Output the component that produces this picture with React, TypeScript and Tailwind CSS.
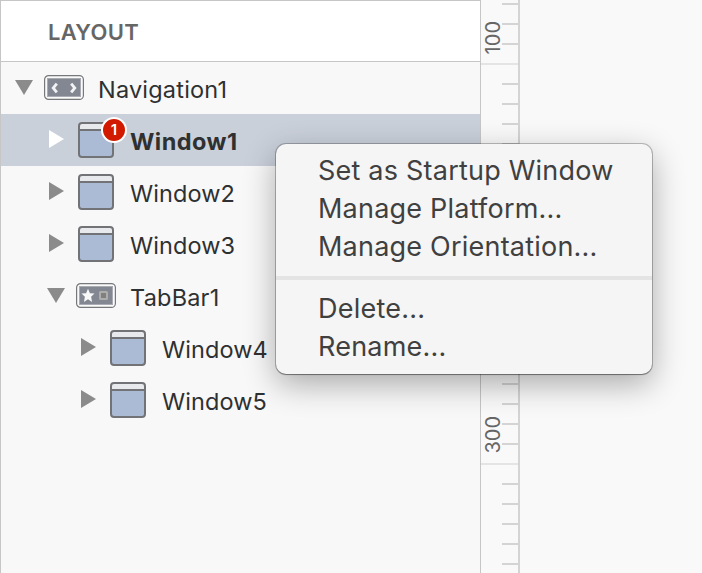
import React from "react";

function WindowIcon() {
  return (
    <svg width="36" height="36" viewBox="0 0 36 36" className="block">
      <rect x="1" y="1" width="34" height="34" rx="3" fill="#abbad5" />
      <path d="M1 8V4a3 3 0 0 1 3-3h28a3 3 0 0 1 3 3v4z" fill="#e8e9ed" />
      <path d="M1 8h34" stroke="#727377" strokeWidth="2" />
      <rect x="1" y="1" width="34" height="34" rx="3" fill="none" stroke="#727377" strokeWidth="2" />
    </svg>
  );
}

function NavigationIcon() {
  return (
    <svg width="40" height="25" viewBox="0 0 40 25" className="block">
      <rect x="0.6" y="0.6" width="38.8" height="23.8" rx="4" fill="#fafafa" stroke="#77787b" strokeWidth="1.2" />
      <rect x="3" y="3" width="34" height="19" fill="#a9acb2" />
      <rect x="4" y="4" width="32" height="17" fill="#828792" />
      <path d="M12.8 8.6l-3.6 4.4 3.6 4.4M27.2 8.6l3.6 4.4-3.6 4.4" fill="none" stroke="#f2f3f4" strokeWidth="2.8" />
    </svg>
  );
}

function TabBarIcon() {
  return (
    <svg width="40" height="25" viewBox="0 0 40 25" className="block">
      <rect x="0.6" y="0.6" width="38.8" height="23.8" rx="4" fill="#fafafa" stroke="#77787b" strokeWidth="1.2" />
      <rect x="3" y="3" width="34" height="19" fill="#a9acb2" />
      <rect x="4" y="4" width="32" height="17" fill="#828792" />
      <path d="M12 5.8l1.9 4.4 4.6.4-3.4 3.2 1 5.2-4.1-2.8L7.9 19l1-5.2-3.4-3.2 4.6-.4z" fill="#f8f8f9" />
      <rect x="24" y="9" width="7" height="7" rx="0.5" fill="#80807e" stroke="#adadac" strokeWidth="2" />
    </svg>
  );
}

function Arrow({ open, light }: { open?: boolean; light?: boolean }) {
  return open ? (
    <svg width="18" height="15" viewBox="0 0 18 15" className="block">
      <path d="M0 0h18L9 15z" fill="#8b8b8b" />
    </svg>
  ) : (
    <svg width="15" height="18" viewBox="0 0 15 18" className="block">
      <path d="M0 0v18l15-9z" fill={light ? "#fff" : "#8b8b8b"} />
    </svg>
  );
}

function WindowRow({ label, nested, selected }: { label: string; nested?: boolean; selected?: boolean }) {
  return (
    <div className={`flex h-[52px] items-start ${nested ? "pl-[80px]" : "pl-12"} ${selected ? "bg-[#cad0da]" : ""}`}>
      <div className="w-[29px] pt-4">
        <Arrow light={selected} />
      </div>
      <div className="relative w-[52px] pt-2">
        <WindowIcon />
        {selected && (
          <span className="absolute top-[3px] left-[23px] flex size-[26px] items-center justify-center rounded-full border-2 border-white bg-[#d11a00] text-[15px] font-semibold text-white">
            1
          </span>
        )}
      </div>
      <span className={`pt-[2px] text-[23.5px] leading-[52px] ${selected ? "font-bold tracking-[0.45px]" : "tracking-[0.1px]"}`}>
        {label}
      </span>
    </div>
  );
}

const ticks = Array.from({ length: 29 }, (_, i) => i);

export default function App() {
  return (
    <div className="relative flex h-[573px] w-[702px] overflow-hidden bg-[#f9f9f9] font-['Inter','Liberation_Sans',sans-serif] text-[#2f3031]">
      <aside className="flex w-[481px] shrink-0 flex-col border-t border-r border-l border-[#c6c6c6] bg-[#f8f8f8]">
        <header className="h-[61px] border-b border-[#c6c6c6] bg-white pl-[47px] text-[22px] leading-[62px] font-semibold tracking-[0.3px] text-[#666]">
          LAYOUT
        </header>
        <div className="flex h-[52px] items-start pl-[14px]">
          <div className="w-[29px] pt-[18px]"><Arrow open /></div>
          <div className="w-[54px] pt-[13px]"><NavigationIcon /></div>
          <span className="pt-[2px] text-[23.5px] leading-[52px] tracking-[0.2px]">Navigation1</span>
        </div>
        <WindowRow label="Window1" selected />
        <WindowRow label="Window2" />
        <WindowRow label="Window3" />
        <div className="flex h-[52px] items-start pl-[46px]">
          <div className="w-[29px] pt-[18px]"><Arrow open /></div>
          <div className="w-[54px] pt-[13px]"><TabBarIcon /></div>
          <span className="pt-[2px] text-[23.5px] leading-[52px] tracking-[0.2px]">TabBar1</span>
        </div>
        <WindowRow label="Window4" nested />
        <WindowRow label="Window5" nested />
      </aside>

      <div className="flex w-[39px] shrink-0 flex-col items-end overflow-hidden border-r-2 border-[#d4d4d4] bg-[#f9f9f9] pt-[3px]">
        {ticks.map((i) => {
          const major = i % 10 === 3;
          return (
            <div key={i} className={`relative h-5 shrink-0 border-t-2 ${major ? "w-full border-[#e4e4e4]" : "w-4 border-[#d4d4d4]"}`}>
              {major && (
                <span className="absolute bottom-[29px] left-[2px] rotate-180 text-[20px] leading-5 text-[#666] [writing-mode:vertical-rl]">
                  {100 + ((i - 3) / 10) * 100}
                </span>
              )}
            </div>
          );
        })}
      </div>

      <div className="absolute top-[144px] left-[276px] flex h-[230px] w-[376px] flex-col rounded-[10px] bg-[#f5f5f5] pt-[8px] text-[27px] leading-[38px] tracking-[0.22px] text-[#404040] shadow-[0_0_0_1px_rgba(0,0,0,0.24),0_1px_1px_rgba(0,0,0,0.28),0_10px_32px_rgba(0,0,0,0.32)]">
        <span className="pl-[42px]">Set as Startup Window</span>
        <span className="pl-[42px]">Manage Platform...</span>
        <span className="pl-[42px]">Manage Orientation...</span>
        <div className="mt-[10px] mb-[10px] h-1 shrink-0 bg-[#e4e4e4]" />
        <span className="pl-[42px]">Delete...</span>
        <span className="pl-[42px]">Rename...</span>
      </div>
    </div>
  );
}
